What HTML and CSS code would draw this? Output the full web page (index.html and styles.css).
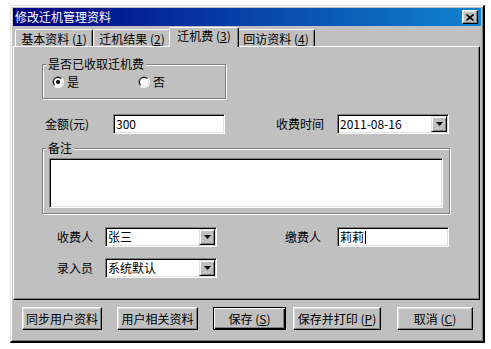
FILE: index.html
```html
<!DOCTYPE html>
<html lang="zh-CN">
<head>
<meta charset="utf-8">
<title>修改迁机管理资料</title>
<link rel="stylesheet" href="styles.css">
</head>
<body>
<div class="window">
  <div class="titlebar">
    <span class="title">修改迁机管理资料</span>
    <span class="close"><svg width="8" height="7" viewBox="0 0 8 7"><path d="M0.5 0.5 L7.5 6.5 M7.5 0.5 L0.5 6.5" stroke="#000" stroke-width="1.7" fill="none"/></svg></span>
  </div>
  <div class="tabs">
    <div class="tab">基本资料 (<u>1</u>)</div>
    <div class="tab">迁机结果 (<u>2</u>)</div>
    <div class="tab active">迁机费 (<u>3</u>)</div>
    <div class="tab">回访资料 (<u>4</u>)</div>
  </div>
  <div class="panel">
    <div class="group paid">
      <div class="glabel">是否已收取迁机费</div>
      <div class="radios">
        <span class="radio">
          <svg width="12" height="12" viewBox="0 0 12 12"><circle cx="6" cy="6" r="6" fill="#fff"/><path d="M1.757 10.243 A6 6 0 0 1 10.243 1.757 Z" fill="#808080"/><circle cx="6" cy="6" r="5" fill="#dfdfdf"/><path d="M2.464 9.536 A5 5 0 0 1 9.536 2.464 Z" fill="#000"/><circle cx="6" cy="6" r="4" fill="#fff"/><circle cx="6" cy="6" r="2" fill="#000"/></svg>
          <span>是</span>
        </span>
        <span class="radio">
          <svg width="12" height="12" viewBox="0 0 12 12"><circle cx="6" cy="6" r="6" fill="#fff"/><path d="M1.757 10.243 A6 6 0 0 1 10.243 1.757 Z" fill="#808080"/><circle cx="6" cy="6" r="5" fill="#dfdfdf"/><path d="M2.464 9.536 A5 5 0 0 1 9.536 2.464 Z" fill="#000"/><circle cx="6" cy="6" r="4" fill="#fff"/></svg>
          <span>否</span>
        </span>
      </div>
    </div>
    <div class="row row-amount">
      <span class="lbl l-amount">金额(元)</span>
      <div class="field w112"><span class="val">300</span></div>
      <span class="lbl l-time">收费时间</span>
      <div class="field combo w112"><span class="val">2011-08-16</span><span class="drop"><svg width="7" height="4" viewBox="0 0 7 4"><path d="M0 0 H7 L3.5 4 Z" fill="#000"/></svg></span></div>
    </div>
    <div class="group note">
      <div class="glabel">备注</div>
      <div class="field textarea"></div>
    </div>
    <div class="row row-payee">
      <span class="lbl l-person">收费人</span>
      <div class="field combo w112"><span class="val">张三</span><span class="drop"><svg width="7" height="4" viewBox="0 0 7 4"><path d="M0 0 H7 L3.5 4 Z" fill="#000"/></svg></span></div>
      <span class="lbl l-payer">缴费人</span>
      <div class="field w112"><span class="val">莉莉</span><span class="caret"></span></div>
    </div>
    <div class="row row-entry">
      <span class="lbl l-person">录入员</span>
      <div class="field combo w112"><span class="val">系统默认</span><span class="drop"><svg width="7" height="4" viewBox="0 0 7 4"><path d="M0 0 H7 L3.5 4 Z" fill="#000"/></svg></span></div>
    </div>
  </div>
  <div class="buttons">
    <div class="btn b1">同步用户资料</div>
    <div class="btn b2">用户相关资料</div>
    <div class="btn b3 default">保存 (<u>S</u>)</div>
    <div class="btn b4">保存并打印 (<u>P</u>)</div>
    <div class="btn b5">取消 (<u>C</u>)</div>
  </div>
</div>
</body>
</html>
```
FILE: styles.css
```css
body {
  margin: 0;
  padding: 5px 0 0 10px;
  background: #fff;
  font-family: "Noto Sans CJK SC", "Noto Sans", sans-serif;
  font-size: 12px;
  color: #000;
}

.window {
  width: 475px;
  height: 338px;
  box-sizing: border-box;
  background: #c0c0c0;
  border: 1px solid;
  border-right-width: 2px;
  border-bottom-width: 2px;
  border-color: #dfdfdf #000 #000 #dfdfdf;
  box-shadow: inset 1px 1px #fff, inset -1px -1px #808080;
  padding: 2px;
}

.titlebar {
  height: 18px;
  display: flex;
  align-items: center;
  justify-content: space-between;
  background: linear-gradient(90deg, #000080, #1084d0);
  color: #fff;
  padding: 0 3px 0 2px;
}

.title { line-height: 14px; }

.close {
  width: 16px;
  height: 14px;
  box-sizing: border-box;
  background: #c0c0c0;
  border: 1px solid;
  border-color: #fff #000 #000 #fff;
  box-shadow: inset -1px -1px #808080, inset 1px 1px #dfdfdf;
  display: flex;
  align-items: center;
  justify-content: center;
}

.tabs {
  display: flex;
  align-items: flex-end;
  height: 19px;
  margin-top: 1px;
  padding-left: 2px;
}

.tab {
  width: 78px;
  height: 17px;
  box-sizing: border-box;
  border: 1px solid;
  border-bottom: 0;
  border-color: #fff #000 transparent #fff;
  border-radius: 2px 2px 0 0;
  box-shadow: inset -1px 0 #808080;
  display: flex;
  align-items: center;
  justify-content: center;
  line-height: 12px;
  padding-top: 1px;
  white-space: nowrap;
}

.tab.active {
  width: 70px;
  height: 20px;
  margin: 0 -2px -1px;
  position: relative;
  z-index: 1;
  background: #c0c0c0;
  padding: 0 0 3px;
}

.panel {
  width: 467px;
  height: 254px;
  box-sizing: border-box;
  border: 1px solid;
  border-color: #fff #000 #000 #fff;
  box-shadow: inset -1px -1px #808080;
}

.group {
  box-sizing: border-box;
  border: 1px solid #808080;
  box-shadow: inset 1px 1px #fff, 1px 1px #fff;
}

.glabel {
  width: fit-content;
  height: 12px;
  line-height: 12px;
  margin: -7px 0 0 3px;
  padding: 0 2px;
  background: #c0c0c0;
  white-space: nowrap;
}

.group.paid {
  margin: 17px 0 0 28px;
  width: 184px;
  height: 35px;
}

.radios {
  display: flex;
  align-items: center;
  height: 16px;
  margin-top: 4px;
  padding-left: 9px;
}

.radio {
  display: flex;
  align-items: center;
  gap: 3px;
  width: 86px;
  line-height: 12px;
}

.row {
  display: flex;
  align-items: center;
  height: 20px;
}

.lbl {
  line-height: 12px;
  white-space: nowrap;
}

.row-amount { margin-top: 15px; }
.l-amount { margin-left: 31px; width: 68px; }
.l-time { margin-left: 51px; width: 61px; }

.field {
  box-sizing: border-box;
  height: 20px;
  background: #fff;
  border: 1px solid;
  border-color: #808080 #fff #fff #808080;
  box-shadow: inset 1px 1px #000, inset -1px -1px #dfdfdf;
  display: flex;
  align-items: center;
  padding-left: 2px;
  line-height: 12px;
}

.w112 { width: 112px; }

.combo {
  justify-content: space-between;
  padding-right: 1px;
}

.drop {
  width: 16px;
  height: 16px;
  box-sizing: border-box;
  background: #c0c0c0;
  border: 1px solid;
  border-color: #dfdfdf #000 #000 #dfdfdf;
  box-shadow: inset 1px 1px #fff, inset -1px -1px #808080;
  display: flex;
  align-items: center;
  justify-content: center;
}

.caret {
  width: 1px;
  height: 13px;
  background: #000;
  margin-left: 1px;
}

.group.note {
  margin: 14px 0 0 28px;
  width: 408px;
  height: 66px;
}

.textarea {
  margin: 4px 0 0 6px;
  width: 394px;
  height: 50px;
}

.row-payee { margin-top: 13px; }
.row-entry { margin-top: 11px; }
.l-person { margin-left: 43px; width: 48px; }
.l-payer { margin-left: 68px; width: 52px; }

.buttons {
  display: flex;
  margin-top: 7px;
  padding-left: 9px;
}

.btn {
  height: 23px;
  box-sizing: border-box;
  border: 1px solid;
  border-color: #fff #000 #000 #fff;
  box-shadow: inset -1px -1px #808080, inset 1px 1px #dfdfdf;
  display: flex;
  align-items: center;
  justify-content: center;
  line-height: 12px;
  white-space: nowrap;
}

.btn.default {
  border-color: #000;
  box-shadow: inset 1px 1px #fff, inset -1px -1px #000, inset -2px -2px #808080;
}

.b1 { width: 80px; }
.b2 { width: 81px; margin-left: 15px; }
.b3 { width: 73px; margin-left: 15px; }
.b4 { width: 88px; margin-left: 7px; }
.b5 { width: 76px; margin-left: 16px; }
```
